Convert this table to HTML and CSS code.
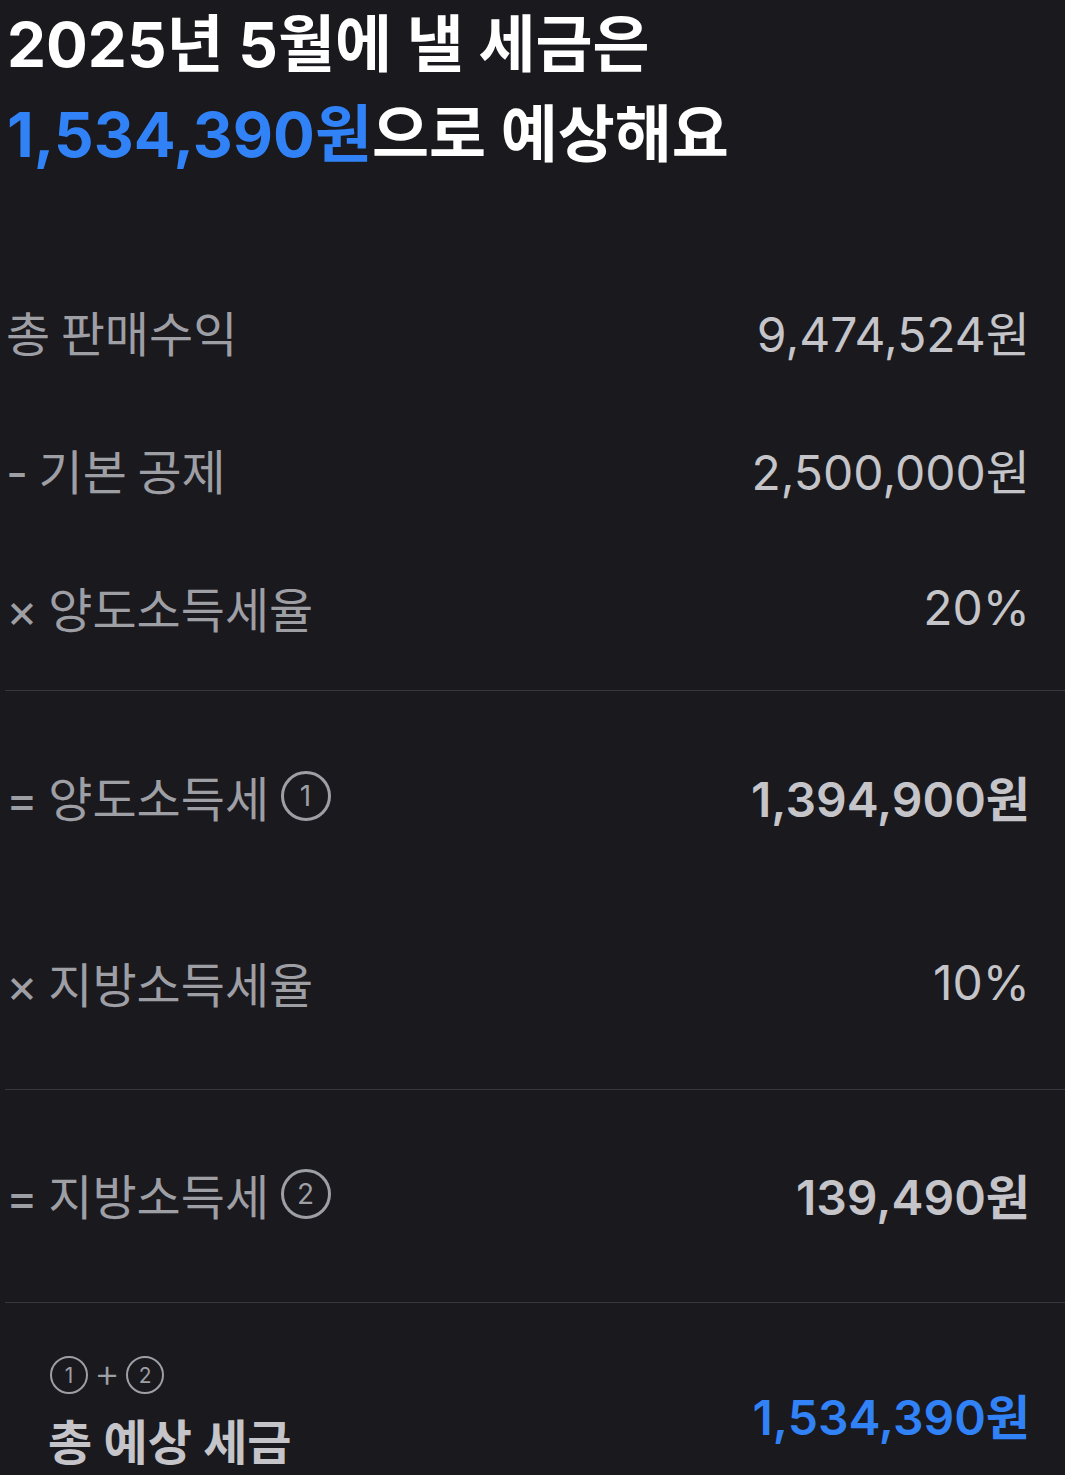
FILE: index.html
```html
<!DOCTYPE html>
<html lang="ko">
<head>
<meta charset="utf-8">
<title>예상 세금</title>
<link rel="stylesheet" href="styles.css">
</head>
<body>
<main class="page">
  <h1 class="title">2025년 5월에 낼 세금은<br><span class="accent">1,534,390원</span>으로 예상해요</h1>

  <section class="group group-first">
    <div class="row"><span class="label">총 판매수익</span><span class="value">9,474,524원</span></div>
    <div class="row"><span class="label">- 기본 공제</span><span class="value">2,500,000원</span></div>
    <div class="row"><span class="label">× 양도소득세율</span><span class="value">20%</span></div>
  </section>

  <section class="group group-second">
    <div class="row"><span class="label">= 양도소득세 <span class="circle">1</span></span><span class="value strong">1,394,900원</span></div>
    <div class="row row-spaced"><span class="label">× 지방소득세율</span><span class="value">10%</span></div>
  </section>

  <section class="group group-third">
    <div class="row"><span class="label">= 지방소득세 <span class="circle">2</span></span><span class="value strong">139,490원</span></div>
  </section>

  <section class="total">
    <div class="total-label">
      <div class="formula"><span class="circle small">1</span><span class="plus">+</span><span class="circle small">2</span></div>
      <div class="total-title">총 예상 세금</div>
    </div>
    <span class="total-value">1,534,390원</span>
  </section>
</main>
</body>
</html>
```

FILE: styles.css
```css
html, body {
  margin: 0;
  padding: 0;
  background: #19191e;
}

body {
  font-family: Inter, "Noto Sans CJK KR", "Noto Sans", sans-serif;
  color: #9e9ea5;
}

.page {
  padding-left: 5px;
  height: 1475px;
  overflow: hidden;
}

.title {
  margin: 0;
  padding-left: 2px;
  font-size: 62px;
  line-height: 90px;
  font-weight: 700;
  color: #ffffff;
}

.accent {
  color: #3182f6;
}

.group {
  border-bottom: 1px solid #36363c;
}

.group-first {
  margin-top: 82px;
  padding-bottom: 14px;
}

.group-second {
  padding: 36px 0 38px;
}

.group-third {
  padding: 35px 0 39px;
}

.row {
  height: 138px;
  display: flex;
  align-items: center;
  justify-content: space-between;
  padding-right: 35px;
  padding-left: 1px;
}

.row-spaced {
  margin-top: 48px;
}

.label {
  font-size: 48px;
  font-weight: 400;
  color: #9e9ea5;
  display: flex;
  align-items: center;
  white-space: pre;
  word-spacing: -3px;
}

.value {
  font-size: 48px;
  font-weight: 400;
  color: #c4c4c9;
}

.value.strong {
  font-weight: 600;
}

.circle {
  box-sizing: border-box;
  width: 50px;
  height: 50px;
  border: 3px solid #9e9ea5;
  border-radius: 50%;
  display: inline-flex;
  align-items: center;
  justify-content: center;
  font-size: 28px;
  font-weight: 400;
  color: #9e9ea5;
  margin-left: 1px;
  word-spacing: 0;
}

.circle.small {
  width: 38px;
  height: 38px;
  border-width: 2.5px;
  font-size: 21px;
  margin-left: 0;
}

.total {
  display: flex;
  align-items: center;
  justify-content: space-between;
  padding: 52px 35px 0 43px;
}

.formula {
  display: flex;
  align-items: center;
  gap: 6px;
  height: 40px;
  padding-left: 2px;
}

.plus {
  font-size: 40px;
  font-weight: 300;
  color: #9e9ea5;
  line-height: 1;
  margin-top: -4px;
}

.total-title {
  margin-top: 18px;
  font-size: 48px;
  font-weight: 700;
  color: #c4c4c9;
  line-height: 60px;
}

.total-value {
  font-size: 48px;
  font-weight: 600;
  color: #3182f6;
  margin-top: 0;
}
```
